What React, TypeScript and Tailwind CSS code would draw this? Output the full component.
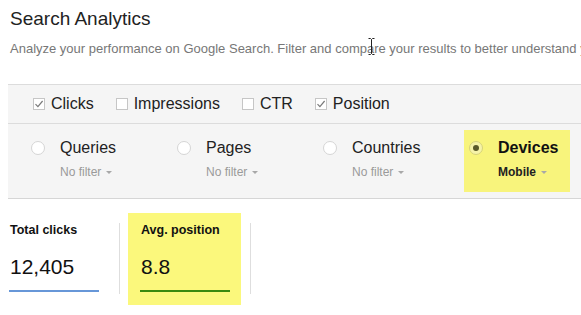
import React from "react";

interface Metric {
  label: string;
  value: string;
  line: string;
  active?: boolean;
}

interface Dimension {
  name: string;
  filter: string;
  active?: boolean;
}

const checks = [
  { label: "Clicks", checked: true },
  { label: "Impressions", checked: false },
  { label: "CTR", checked: false },
  { label: "Position", checked: true },
];

const dimensions: Dimension[] = [
  { name: "Queries", filter: "No filter" },
  { name: "Pages", filter: "No filter" },
  { name: "Countries", filter: "No filter" },
  { name: "Devices", filter: "Mobile", active: true },
];

const metrics: Metric[] = [
  { label: "Total clicks", value: "12,405", line: "bg-[#6797d8]" },
  { label: "Avg. position", value: "8.8", line: "bg-[#3a8a0e]", active: true },
];

const Checkbox = ({ checked }: { checked: boolean }) => (
  <svg width="12" height="12" viewBox="0 0 12 12" aria-hidden>
    <rect x="0.5" y="0.5" width="11" height="11" fill="#fff" stroke="#c6c6c6" />
    {checked && (
      <path d="M2.5 6.2 L4.9 8.6 L9.6 3" fill="none" stroke="#7a7a7a" strokeWidth="1.2" />
    )}
  </svg>
);

const Radio = ({ checked }: { checked?: boolean }) => (
  <svg width="14" height="14" viewBox="0 0 14 14" aria-hidden className="mt-[3px] shrink-0">
    <circle cx="7" cy="7" r="6.5" fill={checked ? "#f6f3a8" : "#fff"} stroke={checked ? "#d6d27a" : "#d4d4d4"} />
    {checked && <circle cx="7" cy="7" r="3" fill="#5a5a2a" />}
  </svg>
);

const Caret = () => (
  <span className="ml-[5px] inline-block h-0 w-0 border-x-[3px] border-t-[3px] border-x-transparent border-t-[#a8a8a8] align-middle" />
);

export default function App() {
  return (
    <div className="relative h-[315px] w-[581px] overflow-hidden bg-white font-['Liberation_Sans',Arial,sans-serif]">
      <div className="pl-[10px] pt-[7px]">
        <h1 className="text-[19px] leading-[24px] text-[#222]">Search Analytics</h1>
        <p className="mt-[10px] whitespace-nowrap text-[13px] leading-[16px] text-[#777]">
          Analyze your performance on Google Search. Filter and compare your results to better understand your
          search traffic.
        </p>
      </div>

      {/* text cursor */}
      <svg width="7" height="17" viewBox="0 0 7 17" className="absolute left-[368px] top-[38px]" aria-hidden>
        <path d="M0.5 0.5 H2.5 L3.5 1.5 L4.5 0.5 H6.5 M3.5 1.5 V15.5 M0.5 16.5 H2.5 L3.5 15.5 L4.5 16.5 H6.5" fill="none" stroke="#222" strokeWidth="1" />
      </svg>

      <div className="ml-2 mt-[27px] overflow-hidden border-y border-t-[#dcdcdc] border-b-[#d6d6d6] bg-[#f5f5f5]">
        <div className="flex h-[39px] items-center border-b border-[#dcdcdc] pl-[25px]">
          {checks.map((c) => (
            <label key={c.label} className="mr-[22px] flex items-center gap-[6px] text-[16px] leading-[20px] text-[#222]">
              <Checkbox checked={c.checked} />
              {c.label}
            </label>
          ))}
        </div>

        <div className="flex py-[6px] pl-[18px]">
          {dimensions.map((d) => (
            <div
              key={d.name}
              className={`mr-[40px] flex h-[62px] w-[106px] shrink-0 gap-[15px] pl-[5px] pt-[8px] ${d.active ? "bg-[#f8f47c]" : ""}`}
            >
              <Radio checked={d.active} />
              <div className="whitespace-nowrap">
                <div className={`text-[16px] leading-[20px] ${d.active ? "font-bold text-[#111]" : "text-[#222]"}`}>
                  {d.name}
                </div>
                <div className={`mt-[6px] text-[12px] leading-[16px] ${d.active ? "font-bold text-[#222]" : "text-[#9a9a9a]"}`}>
                  {d.filter}
                  <Caret />
                </div>
              </div>
            </div>
          ))}
        </div>
      </div>

      <div className="mt-[14px] flex items-start pl-[9px]">
        {metrics.map((m, i) => (
          <React.Fragment key={m.label}>
            {i > 0 && <div className="ml-[20px] mr-[8px] mt-[10px] h-[71px] w-px bg-[#dedede]" />}
            <div className={m.active ? "bg-[#fbf87c] pb-[13px] pl-[12px] pr-[11px] pt-[9px]" : "pb-[13px] pt-[9px]"}>
              <div className="pl-[1px] text-[12.5px] font-bold leading-[16px] text-[#111]">{m.label}</div>
              <div className="mt-[17px] pl-[1px] text-[21px] leading-[24px] text-[#111]">{m.value}</div>
              <div className={`mt-[11px] h-[2px] w-[90px] ${m.line}`} />
            </div>
          </React.Fragment>
        ))}
        <div className="ml-[9px] mt-[10px] h-[71px] w-px bg-[#dedede]" />
      </div>
    </div>
  );
}
